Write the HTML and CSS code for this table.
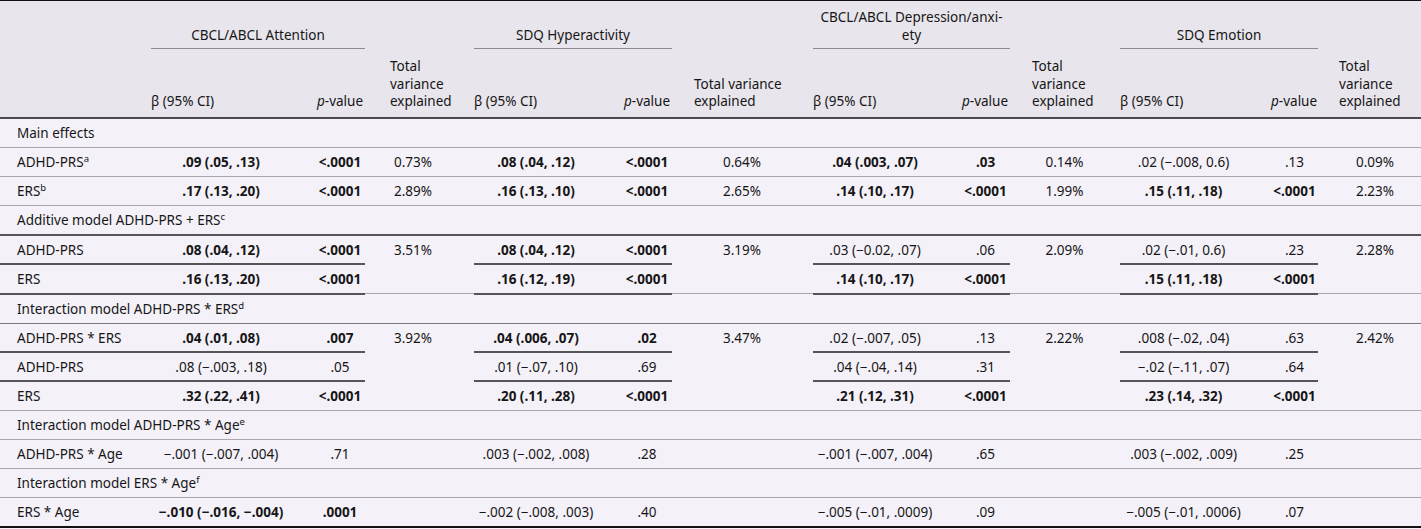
FILE: index.html
```html
<!DOCTYPE html>
<html lang="en">
<head>
<meta charset="utf-8">
<title>Table</title>
<link rel="stylesheet" href="styles.css">
</head>
<body>
<table class="tbl">
  <colgroup>
    <col class="c-lab">
    <col class="c-b1"><col class="c-p1"><col class="c-t1">
    <col class="c-b2"><col class="c-p2"><col class="c-t2">
    <col class="c-b3"><col class="c-p3"><col class="c-t3">
    <col class="c-b4"><col class="c-p4"><col class="c-t4">
  </colgroup>
  <thead>
    <tr class="h1">
      <th rowspan="2" class="lab"></th>
      <th colspan="2" class="grp">CBCL/ABCL Attention</th>
      <th rowspan="2" class="tvh t1">Total variance explained</th>
      <th colspan="2" class="grp">SDQ Hyperactivity</th>
      <th rowspan="2" class="tvh">Total variance explained</th>
      <th colspan="2" class="grp">CBCL/ABCL Depression/anxi-<br>ety</th>
      <th rowspan="2" class="tvh">Total variance explained</th>
      <th colspan="2" class="grp">SDQ Emotion</th>
      <th rowspan="2" class="tvh t4">Total variance explained</th>
    </tr>
    <tr class="h2">
      <th class="bh">β (95% CI)</th><th class="ph"><i>p</i>-value</th>
      <th class="bh">β (95% CI)</th><th class="ph"><i>p</i>-value</th>
      <th class="bh">β (95% CI)</th><th class="ph"><i>p</i>-value</th>
      <th class="bh">β (95% CI)</th><th class="ph"><i>p</i>-value</th>
    </tr>
  </thead>
  <tbody>
    <tr class="lt">
      <td colspan="13" class="sec">Main effects</td>
    </tr>
    <tr class="lt">
      <td class="lab">ADHD-PRS<sup>a</sup></td>
      <td class="b s">.09 (.05, .13)</td><td class="p s">&lt;.0001</td><td class="tv t1">0.73%</td>
      <td class="b s">.08 (.04, .12)</td><td class="p s">&lt;.0001</td><td class="tv">0.64%</td>
      <td class="b s">.04 (.003, .07)</td><td class="p s">.03</td><td class="tv">0.14%</td>
      <td class="b">.02 (−.008, 0.6)</td><td class="p">.13</td><td class="tv t4">0.09%</td>
    </tr>
    <tr class="lt">
      <td class="lab">ERS<sup>b</sup></td>
      <td class="b s">.17 (.13, .20)</td><td class="p s">&lt;.0001</td><td class="tv t1">2.89%</td>
      <td class="b s">.16 (.13, .10)</td><td class="p s">&lt;.0001</td><td class="tv">2.65%</td>
      <td class="b s">.14 (.10, .17)</td><td class="p s">&lt;.0001</td><td class="tv">1.99%</td>
      <td class="b s">.15 (.11, .18)</td><td class="p s">&lt;.0001</td><td class="tv t4">2.23%</td>
    </tr>
    <tr class="dk">
      <td colspan="13" class="sec">Additive model ADHD-PRS + ERS<sup>c</sup></td>
    </tr>
    <tr class="part">
      <td class="lab">ADHD-PRS</td>
      <td class="b s">.08 (.04, .12)</td><td class="p s">&lt;.0001</td><td rowspan="2" class="tv span t1">3.51%</td>
      <td class="b s">.08 (.04, .12)</td><td class="p s">&lt;.0001</td><td rowspan="2" class="tv span">3.19%</td>
      <td class="b">.03 (−0.02, .07)</td><td class="p">.06</td><td rowspan="2" class="tv span">2.09%</td>
      <td class="b">.02 (−.01, 0.6)</td><td class="p">.23</td><td rowspan="2" class="tv span t4">2.28%</td>
    </tr>
    <tr class="dk">
      <td class="lab">ERS</td>
      <td class="b s">.16 (.13, .20)</td><td class="p s">&lt;.0001</td>
      <td class="b s">.16 (.12, .19)</td><td class="p s">&lt;.0001</td>
      <td class="b s">.14 (.10, .17)</td><td class="p s">&lt;.0001</td>
      <td class="b s">.15 (.11, .18)</td><td class="p s">&lt;.0001</td>
    </tr>
    <tr class="md">
      <td colspan="13" class="sec">Interaction model ADHD-PRS * ERS<sup>d</sup></td>
    </tr>
    <tr class="part">
      <td class="lab">ADHD-PRS * ERS</td>
      <td class="b s">.04 (.01, .08)</td><td class="p s">.007</td><td rowspan="3" class="tv span t1">3.92%</td>
      <td class="b s">.04 (.006, .07)</td><td class="p s">.02</td><td rowspan="3" class="tv span">3.47%</td>
      <td class="b">.02 (−.007, .05)</td><td class="p">.13</td><td rowspan="3" class="tv span">2.22%</td>
      <td class="b">.008 (−.02, .04)</td><td class="p">.63</td><td rowspan="3" class="tv span t4">2.42%</td>
    </tr>
    <tr class="part">
      <td class="lab">ADHD-PRS</td>
      <td class="b">.08 (−.003, .18)</td><td class="p">.05</td>
      <td class="b">.01 (−.07, .10)</td><td class="p">.69</td>
      <td class="b">.04 (−.04, .14)</td><td class="p">.31</td>
      <td class="b">−.02 (−.11, .07)</td><td class="p">.64</td>
    </tr>
    <tr class="lt">
      <td class="lab">ERS</td>
      <td class="b s">.32 (.22, .41)</td><td class="p s">&lt;.0001</td>
      <td class="b s">.20 (.11, .28)</td><td class="p s">&lt;.0001</td>
      <td class="b s">.21 (.12, .31)</td><td class="p s">&lt;.0001</td>
      <td class="b s">.23 (.14, .32)</td><td class="p s">&lt;.0001</td>
    </tr>
    <tr class="lt">
      <td colspan="13" class="sec">Interaction model ADHD-PRS * Age<sup>e</sup></td>
    </tr>
    <tr class="lt">
      <td class="lab">ADHD-PRS * Age</td>
      <td class="b">−.001 (−.007, .004)</td><td class="p">.71</td><td class="tv t1"></td>
      <td class="b">.003 (−.002, .008)</td><td class="p">.28</td><td class="tv"></td>
      <td class="b">−.001 (−.007, .004)</td><td class="p">.65</td><td class="tv"></td>
      <td class="b">.003 (−.002, .009)</td><td class="p">.25</td><td class="tv t4"></td>
    </tr>
    <tr class="lt">
      <td colspan="13" class="sec">Interaction model ERS * Age<sup>f</sup></td>
    </tr>
    <tr class="last">
      <td class="lab">ERS * Age</td>
      <td class="b s">−.010 (−.016, −.004)</td><td class="p s">.0001</td><td class="tv t1"></td>
      <td class="b">−.002 (−.008, .003)</td><td class="p">.40</td><td class="tv"></td>
      <td class="b">−.005 (−.01, .0009)</td><td class="p">.09</td><td class="tv"></td>
      <td class="b">−.005 (−.01, .0006)</td><td class="p">.07</td><td class="tv t4"></td>
    </tr>
  </tbody>
</table>
</body>
</html>
```

FILE: styles.css
```css
html, body {
  margin: 0;
  padding: 0;
  background: #f4f1f9;
}

.tbl {
  width: 1421px;
  table-layout: fixed;
  border-collapse: collapse;
  font-family: "Noto Sans", "Open Sans", sans-serif;
  font-size: 13.5px;
  color: #161616;
  border-top: 1px solid #111;
}

.c-lab { width: 151px; }
.c-b1 { width: 164px; }
.c-p1 { width: 50px; }
.c-t1 { width: 109px; }
.c-b2 { width: 148px; }
.c-p2 { width: 50px; }
.c-t2 { width: 141px; }
.c-b3 { width: 148px; }
.c-p3 { width: 49px; }
.c-t3 { width: 110px; }
.c-b4 { width: 151px; }
.c-p4 { width: 47px; }
.c-t4 { width: 103px; }

thead {
  background: #e8e5ec;
}

thead th {
  font-weight: 400;
  line-height: 17.5px;
  vertical-align: bottom;
  padding: 0;
  white-space: normal;
}

thead tr.h2 th {
  border-bottom: 2px solid #4a4a4a;
}

thead th.lab {
  border-bottom: 2px solid #4a4a4a;
}

.h1 { height: 48px; }
.h2 { height: 69px; }

th.grp {
  text-align: center;
  padding-bottom: 4px;
  border-bottom: 1px solid #8c8c8c;
}

th.tvh {
  text-align: left;
  padding: 0 23px 6px 22px;
  border-bottom: 2px solid #4a4a4a;
}

th.tvh.t1 { padding-left: 25px; }
th.tvh.t4 { padding-left: 21px; padding-right: 0; }

th.bh {
  text-align: left;
  padding-bottom: 6px;
}

th.ph {
  text-align: right;
  padding-right: 2px;
  padding-bottom: 6px;
  white-space: nowrap;
}

tbody {
  background: #f4f1f9;
}

tbody td {
  padding: 6px 0 5px;
  line-height: 17px;
  white-space: nowrap;
  vertical-align: middle;
}

td.sec,
td.lab {
  padding-left: 17px;
  text-align: left;
}

td.b {
  text-align: center;
  padding-right: 24px;
}

td.p {
  text-align: center;
}

td.tv {
  text-align: center;
  padding-left: 22px;
  padding-right: 23px;
}

td.tv.span {
  vertical-align: top;
}

td.tv.t1 { padding-left: 25px; padding-right: 38px; }
td.tv.t4 { padding-left: 21px; padding-right: 10px; }

td.s { font-weight: 700; }

sup {
  font-size: 9.5px;
  line-height: 0;
  vertical-align: 5px;
}

tr.lt td { border-bottom: 1px solid #a8a8a8; }
tr.md td { border-bottom: 1px solid #7a7a7a; }
tr.dk td { border-bottom: 2px solid #555; }
tr.part td { padding-bottom: 4px; }
tr.part td.lab,
tr.part td.b,
tr.part td.p { border-bottom: 2px solid #555; }
tr.part td.tv.t1,
tr.part td.tv { border-bottom: 1px solid #a8a8a8; }
tr.last td { border-bottom: 2px solid #111; }
```
